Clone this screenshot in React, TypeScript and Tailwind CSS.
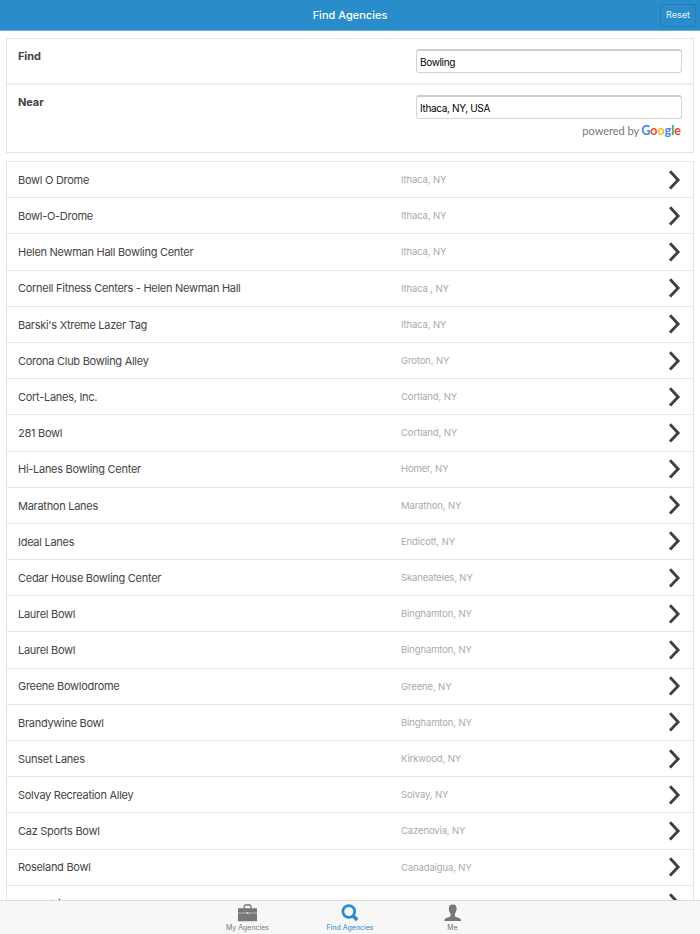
import React, { useState } from 'react';
import { clsx } from 'clsx';

interface Agency {
  name: string;
  city?: string;
}

const agencies: Agency[] = [
  { name: 'Bowl O Drome', city: 'Ithaca, NY' },
  { name: 'Bowl-O-Drome', city: 'Ithaca, NY' },
  { name: 'Helen Newman Hall Bowling Center', city: 'Ithaca, NY' },
  { name: 'Cornell Fitness Centers - Helen Newman Hall', city: 'Ithaca , NY' },
  { name: "Barski's Xtreme Lazer Tag", city: 'Ithaca, NY' },
  { name: 'Corona Club Bowling Alley', city: 'Groton, NY' },
  { name: 'Cort-Lanes, Inc.', city: 'Cortland, NY' },
  { name: '281 Bowl', city: 'Cortland, NY' },
  { name: 'Hi-Lanes Bowling Center', city: 'Homer, NY' },
  { name: 'Marathon Lanes', city: 'Marathon, NY' },
  { name: 'Ideal Lanes', city: 'Endicott, NY' },
  { name: 'Cedar House Bowling Center', city: 'Skaneateles, NY' },
  { name: 'Laurel Bowl', city: 'Binghamton, NY' },
  { name: 'Laurel Bowl', city: 'Binghamton, NY' },
  { name: 'Greene Bowlodrome', city: 'Greene, NY' },
  { name: 'Brandywine Bowl', city: 'Binghamton, NY' },
  { name: 'Sunset Lanes', city: 'Kirkwood, NY' },
  { name: 'Solvay Recreation Alley', city: 'Solvay, NY' },
  { name: 'Caz Sports Bowl', city: 'Cazenovia, NY' },
  { name: 'Roseland Bowl', city: 'Canadaigua, NY' },
  { name: "AMF Strike 'N Spare Lanes - S" },
];

function Chevron() {
  return (
    <svg width="12" height="20" viewBox="0 0 12 20" fill="none" stroke="#404042" strokeWidth="2.9">
      <path d="M1 1.200 9.100 9.900 1 18.600" />
    </svg>
  );
}

function BriefcaseIcon() {
  return (
    <svg width="20" height="18" viewBox="0 0 20 18" fill="currentColor">
      <path d="M6.200 4.500V2.400Q6.200 1 7.600 1h4.000q1.400 0 1.400 1.400v2.100" fill="none" stroke="currentColor" strokeWidth="1.300" />
      <path d="M0 4.200h19v4.500h-8.700v-.5H8.700v.5H0z" />
      <path d="M0 9.300h8.700v.5h1.600v-.5H19v7.900H0z" />
    </svg>
  );
}

function SearchIcon() {
  return (
    <svg width="18" height="18" viewBox="0 0 18 18" fill="none" stroke="currentColor">
      <circle cx="7.800" cy="7.500" r="5.900" strokeWidth="2.700" />
      <path d="m12 11.800 4.200 4.200" strokeWidth="3.600" />
    </svg>
  );
}

function PersonIcon() {
  return (
    <svg width="18" height="18" viewBox="0 0 18 18" fill="currentColor">
      <path d="M8.700.5c2.700 0 3.900 1.500 3.900 3.900 0 2.100-.6 3.700-1.700 5v2c0 1.100 1 1.600 2.700 2.100 2.300.7 3.500 1.400 3.500 3.600H.3c0-2.200 1.200-2.900 3.500-3.600 1.700-.5 2.700-1 2.700-2.100v-2c-1.100-1.300-1.700-2.900-1.700-5C4.800 2 6 .5 8.700.5z" />
    </svg>
  );
}

const tabs = [
  { name: 'My Agencies', icon: BriefcaseIcon },
  { name: 'Find Agencies', icon: SearchIcon },
  { name: 'Me', icon: PersonIcon },
];

const inputClass =
  'block h-[24px] w-[266px] rounded-[3px] border border-[#d4d4d4] border-t-2 border-t-[#cccccc] bg-white px-[3px] text-[10px] tracking-[-0.35px] text-black outline-none';

export default function App() {
  const [find, setFind] = useState('Bowling');
  const [near, setNear] = useState('Ithaca, NY, USA');
  const [activeTab, setActiveTab] = useState('Find Agencies');

  const handleReset = () => {
    setFind('');
    setNear('');
  };

  return (
    <div className="flex h-[934px] w-[700px] flex-col overflow-hidden bg-white font-['Inter',sans-serif] text-[#444444]">
      {/* Header */}
      <header className="grid h-[31px] shrink-0 grid-cols-[1fr_auto_1fr] items-center border-b border-[#70b1dc] bg-[#298ccb] px-[4px] text-white">
        <h1 className="col-start-2 pt-px text-center text-[11px] font-medium">Find Agencies</h1>
        <button
          onClick={handleReset}
          className="h-[23px] w-[36px] justify-self-end rounded-[2px] border border-[#217eb9] text-[9px] text-white/90"
        >
          Reset
        </button>
      </header>

      <main className="min-h-0 flex-1 overflow-hidden px-[6px] pt-[7px]">
        {/* Search form */}
        <form className="border border-[#e6e6e6]">
          <label className="flex h-[46px] justify-between border-b-2 border-[#eeeeee] px-[11px] pt-[10px]">
            <span className="text-[11px] font-bold leading-[15px] tracking-[-0.1px]">Find</span>
            <input className={inputClass} value={find} onChange={(e) => setFind(e.target.value)} />
          </label>
          <div className="flex h-[67px] justify-between px-[11px] pt-[10px]">
            <span className="text-[11px] font-bold leading-[15px] tracking-[-0.1px]">Near</span>
            <div>
              <input className={inputClass} value={near} onChange={(e) => setNear(e.target.value)} />
              <div className="mt-[4px] flex items-baseline justify-end gap-[2px] pr-px font-['Lato',sans-serif] leading-[16px]">
                <span className="text-[11px] text-[#777777]">powered by</span>
                <span className="text-[12.5px] font-bold">
                  <span className="text-[#4285f4]">G</span>
                  <span className="text-[#ea4335]">o</span>
                  <span className="text-[#fbbc05]">o</span>
                  <span className="text-[#4285f4]">g</span>
                  <span className="text-[#34a853]">l</span>
                  <span className="text-[#ea4335]">e</span>
                </span>
              </div>
            </div>
          </div>
        </form>

        {/* Results */}
        <ul className="mt-[8px] border border-[#e6e6e6]">
          {agencies.map((agency, i) => (
            <li key={i} className="flex h-[36.2px] items-center border-b border-[#e6e6e6] pl-[11px] pr-[12px]">
              <span className="w-[383px] pt-px text-[11px] tracking-[-0.28px]">{agency.name}</span>
              <span className="flex-1 pt-px text-[9.5px] tracking-[-0.13px] text-[#aaaaaa]">{agency.city}</span>
              <Chevron />
            </li>
          ))}
        </ul>
      </main>

      {/* Tab bar */}
      <nav className="flex h-[34px] shrink-0 justify-center border-t border-[#dcdcdc] bg-[#f7f7f7]">
        {tabs.map((tab) => (
          <button
            key={tab.name}
            onClick={() => setActiveTab(tab.name)}
            className={clsx(
              'flex w-[102.5px] flex-col items-center pt-[3px] text-[7px]',
              activeTab === tab.name ? 'text-[#298ccb]' : 'text-[#777777]'
            )}
          >
            <tab.icon />
            <span className="leading-[12px]">{tab.name}</span>
          </button>
        ))}
      </nav>
    </div>
  );
}
